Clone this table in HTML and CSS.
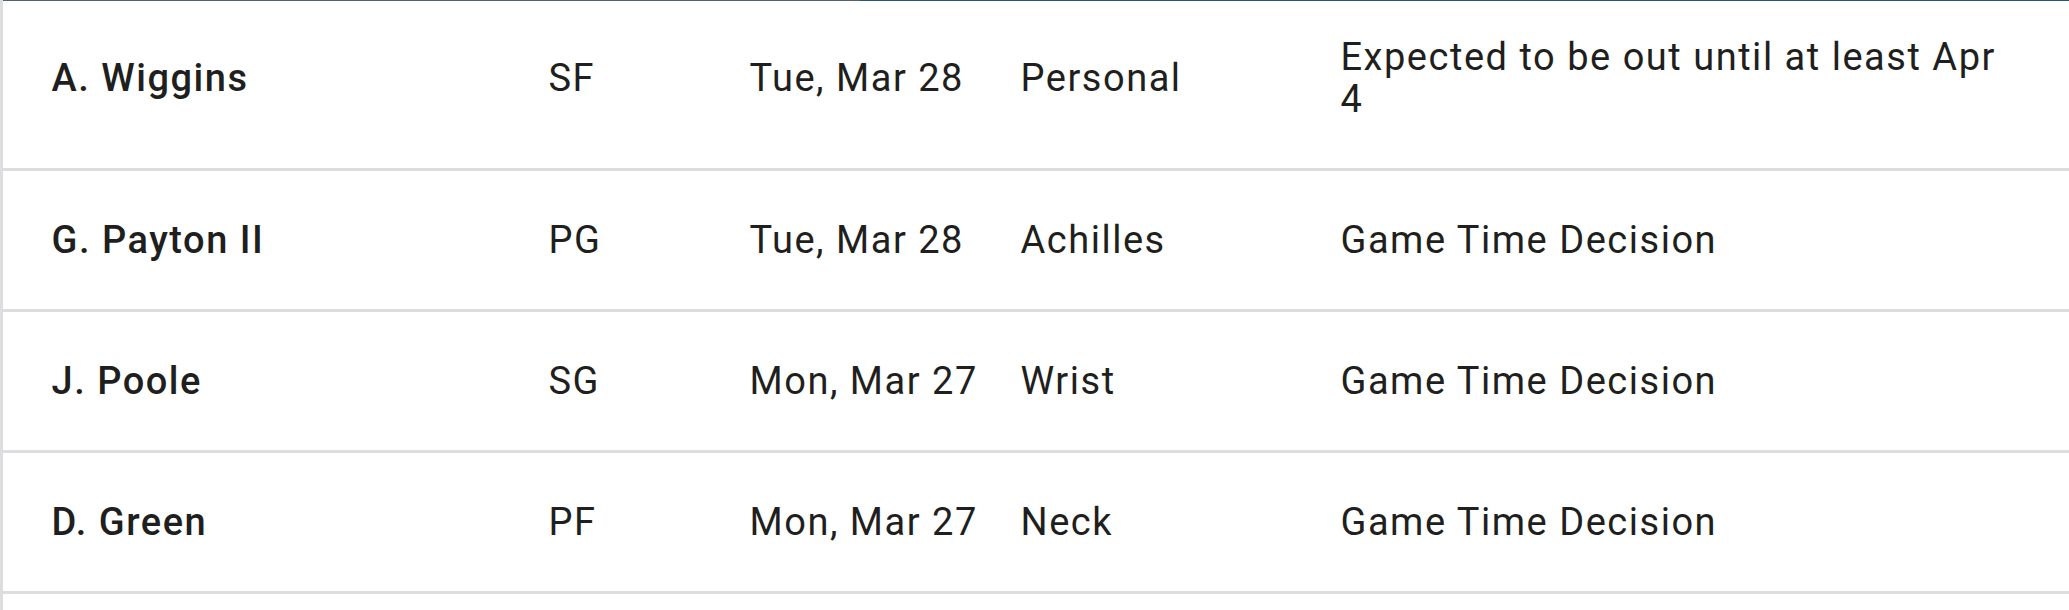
FILE: index.html
```html
<!DOCTYPE html>
<html lang="en">
<head>
<meta charset="utf-8">
<title>Injuries</title>
<link rel="stylesheet" href="styles.css">
</head>
<body>
<div class="table-wrap">
  <div class="table" role="table">
    <div class="row" role="row">
      <div class="cell name">A. Wiggins</div>
      <div class="cell">SF</div>
      <div class="cell">Tue, Mar 28</div>
      <div class="cell">Personal</div>
      <div class="cell status">Expected to be out until at least Apr 4</div>
    </div>
    <div class="row" role="row">
      <div class="cell name">G. Payton II</div>
      <div class="cell">PG</div>
      <div class="cell">Tue, Mar 28</div>
      <div class="cell">Achilles</div>
      <div class="cell status">Game Time Decision</div>
    </div>
    <div class="row" role="row">
      <div class="cell name">J. Poole</div>
      <div class="cell">SG</div>
      <div class="cell">Mon, Mar 27</div>
      <div class="cell">Wrist</div>
      <div class="cell status">Game Time Decision</div>
    </div>
    <div class="row" role="row">
      <div class="cell name">D. Green</div>
      <div class="cell">PF</div>
      <div class="cell">Mon, Mar 27</div>
      <div class="cell">Neck</div>
      <div class="cell status">Game Time Decision</div>
    </div>
  </div>
</div>
</body>
</html>
```
FILE: styles.css
```css
html, body {
  margin: 0;
  padding: 0;
  background: #ffffff;
}

body {
  font-family: Roboto, "Liberation Sans", sans-serif;
  color: #1f1f20;
  overflow: hidden;
}

.table-wrap {
  height: 609px;
  overflow: hidden;
  padding-top: 1px;
  border-left: 3px solid #dcdddf;
  background-image: linear-gradient(to right, #56626d 0, #56626d 857px, #23587a 857px);
  background-repeat: no-repeat;
  background-size: 100% 1px;
  background-position: 0 0;
  background-color: #ffffff;
}

.table {
  margin-top: -13px;
}

.row {
  display: grid;
  grid-template-columns: 497px 201px 271px 320px 660px;
  align-items: center;
  padding: 48px 0 48px 48.5px;
  border-bottom: 3px solid #dcdddf;
}

.cell {
  font-size: 38px;
  line-height: 42px;
  letter-spacing: 0.04em;
  font-weight: 400;
}

.cell.name {
  font-weight: 500;
}
```
